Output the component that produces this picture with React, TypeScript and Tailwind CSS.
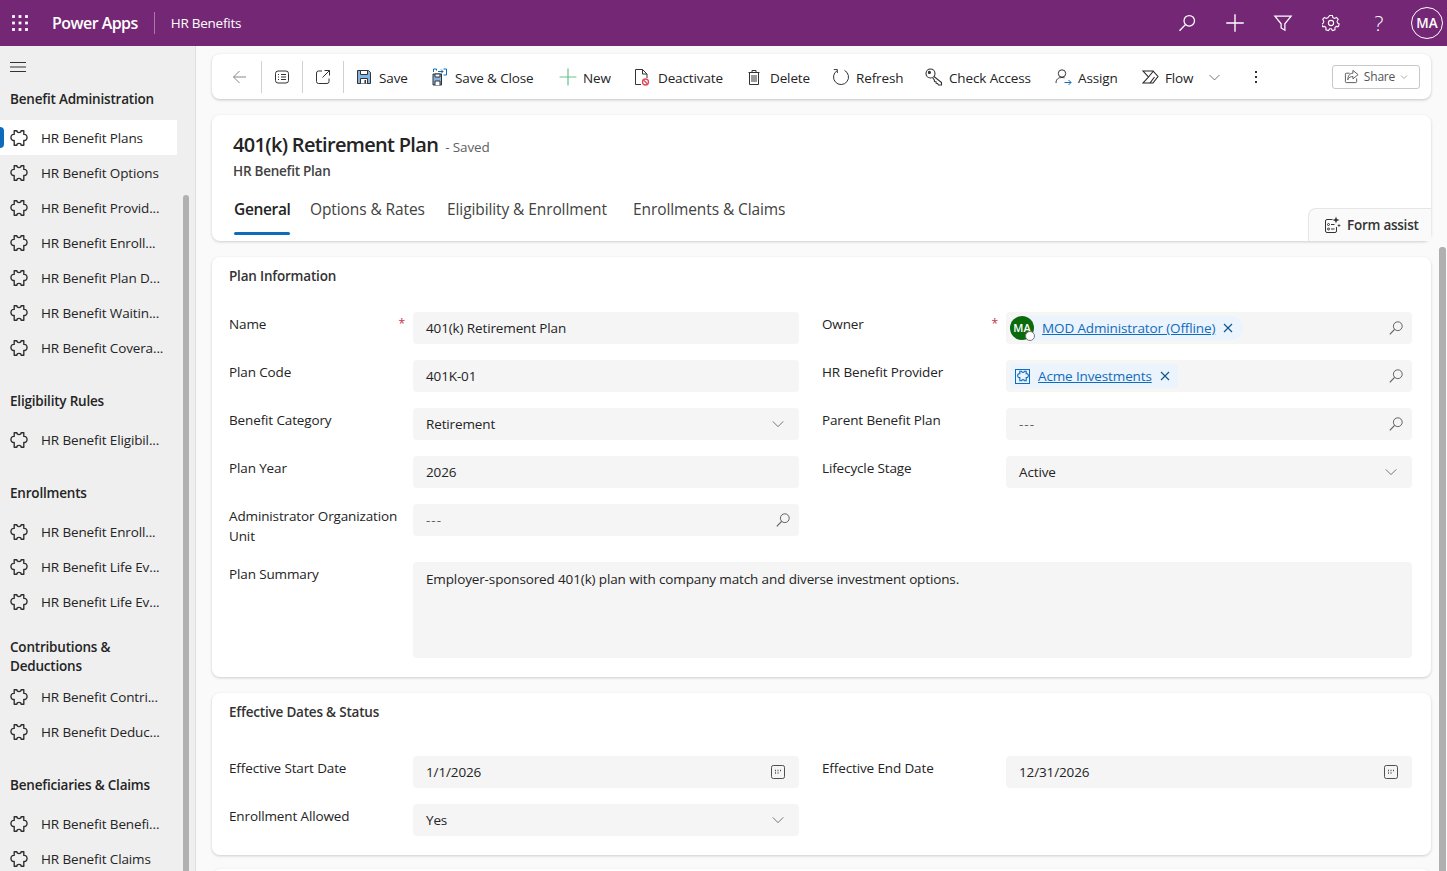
import type { ReactNode } from "react";

const font = "font-['Open_Sans','Liberation_Sans',sans-serif]";

const puzzlePath =
  "M5 3 H7.2 C7.2 5 10.8 5 10.8 3 H13 V6 C16.6 5.4 16.6 11.6 13 11 V15 H10.8 C10.8 13 7.2 13 7.2 15 H5 V11 C1.4 11.6 1.4 5.4 5 6 Z";

function Svg({ size = 16, className = "", children }: { size?: number; className?: string; children: ReactNode }) {
  return (
    <svg width={size} height={size} viewBox="0 0 16 16" fill="none" stroke="currentColor" strokeWidth="1" className={className}>
      {children}
    </svg>
  );
}

function PuzzleIcon() {
  return (
    <svg width="18" height="18" viewBox="1.5 1.5 15 15" fill="none" stroke="#2f2f2f" strokeWidth="1.15" strokeLinejoin="round" className="shrink-0">
      <path d={puzzlePath} />
    </svg>
  );
}

function SearchIcon({ className = "text-[#616161]" }: { className?: string }) {
  return (
    <Svg className={className}>
      <circle cx="9.8" cy="6.2" r="4.4" />
      <path d="M6.6 9.4 L1.8 14.4" strokeWidth="1.2" />
    </Svg>
  );
}

function ChevronIcon({ className = "text-[#616161]", size = 14 }: { className?: string; size?: number }) {
  return (
    <Svg size={size} className={className}>
      <path d="M2 5 L8 11 L14 5" />
    </Svg>
  );
}

function FieldChevron() {
  return (
    <span className="mr-[6px] flex">
      <ChevronIcon />
    </span>
  );
}

function CalendarIcon() {
  return (
    <span className="mr-[5px] flex">
      <Svg className="text-[#505050]">
        <rect x="1.5" y="1.5" width="13" height="13" rx="1.8" />
        <path d="M5 6.5h1M7.5 6.5h1M10 6.5h1M5 9h1M7.5 9h1" strokeWidth="1.3" />
      </Svg>
    </span>
  );
}

function Waffle() {
  return (
    <svg width="16" height="16" viewBox="0 0 16 16" fill="white">
      {[1.5, 8, 14.5].map((y) =>
        [1.5, 8, 14.5].map((x) => <rect key={`${x}-${y}`} x={x - 1.4} y={y - 1.4} width="2.8" height="2.8" />),
      )}
    </svg>
  );
}

const navSections = [
  {
    title: "Benefit Administration",
    head: "h-[30px] pl-[10px] pt-0",
    items: ["HR Benefit Plans", "HR Benefit Options", "HR Benefit Provid...", "HR Benefit Enroll...", "HR Benefit Plan D...", "HR Benefit Waitin...", "HR Benefit Covera..."],
  },
  { title: "Eligibility Rules", head: "h-[57px] pl-[10px] pt-[27px]", items: ["HR Benefit Eligibil..."] },
  { title: "Enrollments", head: "h-[57px] pl-[10px] pt-[27px]", items: ["HR Benefit Enroll...", "HR Benefit Life Ev...", "HR Benefit Life Ev..."] },
  { title: "Contributions & Deductions", head: "h-[60px] pl-[10px] pt-[19px]", items: ["HR Benefit Contri...", "HR Benefit Deduc..."] },
  { title: "Beneficiaries & Claims", head: "h-[57px] pl-[10px] pt-[27px]", items: ["HR Benefit Benefi...", "HR Benefit Claims"] },
];

function Sidebar() {
  return (
    <aside className="relative h-full w-[196px] shrink-0 overflow-hidden border-r border-[#e0e0e0] bg-[#efefef]">
      <div className="flex h-[44px] items-start pt-[13px] pl-[10px]">
        <svg width="16" height="16" viewBox="0 0 16 16" stroke="#333" strokeWidth="1">
          <path d="M0 3.5h16M0 8h16M0 12.5h16" />
        </svg>
      </div>
      {navSections.map((section, s) => (
        <div key={section.title}>
          <div className={`${section.head} w-[170px] text-[13.5px] leading-[19px] font-semibold tracking-[-0.2px] text-[#242424]`}>
            {section.title}
          </div>
          {section.items.map((item, i) => {
            const active = s === 0 && i === 0;
            return (
              <div key={`${item}-${i}`} className={`relative flex h-[35px] w-[177px] items-center gap-[13px] pl-[10px] ${active ? "bg-white" : ""}`}>
                {active && <span className="absolute top-[7px] left-0 h-[21px] w-[4px] rounded-r-sm bg-[#0f6cbd]" />}
                <PuzzleIcon />
                <span className="pt-[1px] text-[13.5px] tracking-[-0.13px] whitespace-nowrap text-[#242424]">{item}</span>
              </div>
            );
          })}
        </div>
      ))}
      <div className="absolute top-[149px] bottom-0 left-[183px] w-[6px] rounded-t-[3px] bg-[#b0b0b0]" />
    </aside>
  );
}

function TopBar() {
  return (
    <header className="flex h-[46px] shrink-0 items-center bg-[#742774] text-white">
      <div className="flex w-[52px] shrink-0 pl-[12px]">
        <Waffle />
      </div>
      <span className="text-[16px] font-semibold tracking-[-0.55px]">Power Apps</span>
      <span className="mx-[16px] h-[22px] w-px bg-[#a878a8]" />
      <span className="text-[13.5px] tracking-[-0.25px]">HR Benefits</span>
      <div className="ml-auto flex items-center">
        <HeadBtn>
          <Svg size={20}>
            <circle cx="9.8" cy="6.2" r="4.2" />
            <path d="M6.7 9.3 L2 14.2" strokeWidth="1.1" />
          </Svg>
        </HeadBtn>
        <HeadBtn>
          <Svg size={20}>
            <path d="M8 1v14M1 8h14" strokeWidth="1.1" />
          </Svg>
        </HeadBtn>
        <HeadBtn>
          <Svg size={20}>
            <path d="M1.5 2.5h13L9.5 8.6V13.8L6.5 12V8.6Z" />
          </Svg>
        </HeadBtn>
        <HeadBtn>
          <svg width="18" height="18" viewBox="0 0 18 18" fill="none" stroke="currentColor" strokeWidth="1.1">
            <circle cx="9" cy="9" r="2.6" />
            <path d="M7.6 1.5h2.8l.5 2.1 1.7.8 1.9-1 1.7 2-1.1 1.9.4 1.7 1.7 1-.9 2.6-2.1-.2-1.3 1.3.1 2.1-2.6.7-1.1-1.8h-1.7l-1.1 1.8-2.6-.7.1-2.1-1.3-1.3-2.1.2-.9-2.6 1.7-1 .4-1.7-1.1-1.9 1.7-2 1.9 1 1.7-.8Z" />
          </svg>
        </HeadBtn>
        <HeadBtn>
          <span className="text-[21px] leading-none font-light">?</span>
        </HeadBtn>
        <div className="mr-[4px] ml-[8px] flex h-[32px] w-[32px] items-center justify-center rounded-full border border-white text-[13.5px] font-semibold">
          MA
        </div>
      </div>
    </header>
  );
}

function HeadBtn({ children }: { children: ReactNode }) {
  return <div className="flex h-[46px] w-[48px] items-center justify-center">{children}</div>;
}

function Cmd({ icon, label, width, gap = "gap-[6px]" }: { icon: ReactNode; label: string; width: string; gap?: string }) {
  return (
    <div className={`flex h-[44px] shrink-0 items-center ${gap} ${width}`}>
      <span className="flex w-[18px] shrink-0 justify-center pt-[1px]">{icon}</span>
      <span className="pt-[3px] text-[13.5px] tracking-[-0.13px] whitespace-nowrap text-[#242424]">{label}</span>
    </div>
  );
}

function CommandBar() {
  return (
    <div className="flex h-[45px] items-center rounded-lg bg-white pl-[19px] shadow-[0_1px_3px_rgba(0,0,0,0.22)]">
      <span className="flex w-[18px] justify-center pt-[1px] text-[#888]">
        <Svg>
          <path d="M14 8H1.5M7.5 2 1.5 8l6 6" />
        </Svg>
      </span>
      <span className="ml-[12px] h-[32px] w-px bg-[#d1d1d1]" />
      <span className="ml-[11px] flex w-[17px] justify-center pt-[1px] text-[#333]">
        <Svg>
          <rect x="1.5" y="2" width="13" height="12" rx="2.5" />
          <path d="M4 5.5h1M7 5.5h5M4 8h1M7 8h5M4 10.5h1M7 10.5h5" />
        </Svg>
      </span>
      <span className="ml-[12px] h-[32px] w-px bg-[#d1d1d1]" />
      <span className="ml-[11px] flex w-[18px] justify-center pt-[1px] text-[#333]">
        <Svg>
          <path d="M7 2H3.5A2 2 0 0 0 1.5 4v8.5a2 2 0 0 0 2 2H12a2 2 0 0 0 2-2V9.5M9.5 1.5h5v5M14.5 1.5 7.5 8.5" />
        </Svg>
      </span>
      <span className="ml-[11px] h-[32px] w-px bg-[#d1d1d1]" />
      <div className="ml-[11px] flex items-center">
        <Cmd
          width="w-[76px]"
          icon={
            <svg width="16" height="16" viewBox="0 0 16 16">
              <path d="M1.5 1.5h11l2 2v11h-13Z" fill="#83b4e3" stroke="#333" />
              <path d="M4.5 1.5h7v4h-7Z" fill="#fff" stroke="#333" />
              <path d="M4.5 14.5v-5h7v5" fill="#fff" stroke="#333" />
              <path d="M8.5 11h1.5v3.5h-1.5Z" fill="#333" />
            </svg>
          }
          label="Save"
        />
        <Cmd
          width="w-[128px]"
          icon={
            <svg width="16" height="18" viewBox="0 0 16 18" fill="none">
              <path d="M1 6h8.5v11H1Z" fill="#83b4e3" stroke="#333" />
              <path d="M3 6h5v3H3ZM3 17v-4h5v4" fill="#fff" stroke="#333" />
              <path d="M4.5 2.5V1H1.5V4M11.5 1h3v6h-3M6 3.5h5M9 1.5l2 2-2 2" stroke="#0f6cbd" />
            </svg>
          }
          label="Save & Close"
        />
        <Cmd
          width="w-[74px]"
          icon={
            <Svg size={18} className="text-[#6cc28f]">
              <path d="M8 .5v15M.5 8h15" strokeWidth="1.1" />
            </Svg>
          }
          label="New"
        />
        <Cmd
          width="w-[112px]"
          gap="gap-[7px]"
          icon={
            <svg width="16" height="18" viewBox="0 0 16 18" fill="none">
              <path d="M7 16.5H1.5v-15h7l4.5 4.5v4M8.5 1.5v4.5H13" stroke="#333" />
              <circle cx="11.5" cy="14" r="3" stroke="#e0495b" strokeWidth="1.3" />
              <path d="M9.5 12 13.5 16" stroke="#e0495b" strokeWidth="1.3" />
            </svg>
          }
          label="Deactivate"
        />
        <Cmd
          width="w-[87px]"
          gap="gap-[7px]"
          icon={
            <svg width="12" height="17" viewBox="0 0 12 17" fill="none" stroke="#333">
              <path d="M1.5 3.5h9v12h-9ZM.5 3.5h11M4 3.5V1.5h4v2M4 6v7M6 6v7M8 6v7" />
            </svg>
          }
          label="Delete"
        />
        <Cmd
          width="w-[93px]"
          icon={
            <svg width="18" height="18" viewBox="0 0 18 18" fill="none" stroke="#333">
              <path d="M5.2 2.6A7.5 7.5 0 1 0 12.5 2.4" />
              <path d="M1.8 1.5h3.6v3.6" strokeWidth="0.9" />
            </svg>
          }
          label="Refresh"
        />
        <Cmd
          width="w-[129px]"
          icon={
            <svg width="18" height="18" viewBox="0 0 18 18" fill="none" stroke="#333" strokeWidth="1.1">
              <circle cx="5.5" cy="5.5" r="4.5" />
              <circle cx="4.4" cy="4.4" r="1" fill="#333" />
              <path d="M9 8.5 16.5 14.5v2.5h-3l-1-1.5-1.3-.2-.2-1.6-1.5-.2-.2-1.5L7.8 10" />
            </svg>
          }
          label="Check Access"
        />
        <Cmd
          width="w-[87px]"
          icon={
            <svg width="17" height="16" viewBox="0 0 17 16" fill="none" stroke="#333">
              <circle cx="7" cy="4.5" r="3.7" />
              <path d="M1 14c0-3.5 2-5.5 6-5.5 1 0 1.8.1 2.5.4" />
              <path d="M9.5 13.5h6.5M13.5 11l2.5 2.5-2.5 2.5" stroke="#0f6cbd" />
            </svg>
          }
          label="Assign"
        />
        <Cmd
          width="w-[67px]"
          icon={
            <svg width="17" height="14" viewBox="0 0 17 14" fill="none" stroke="#222" strokeWidth="1.1">
              <path d="M1 1h10l5 5.5-5 6.5H1l5.5-6Z" />
              <path d="M6.5 7 11.5 1M8 13l4.5-6" />
            </svg>
          }
          label="Flow"
        />
        <span className="pt-[1px]">
          <ChevronIcon size={13} className="text-[#555]" />
        </span>
        <span className="ml-[34px] flex flex-col gap-[3px] pt-[1px]">
          <span className="h-[2px] w-[2px] bg-[#333]" />
          <span className="h-[2px] w-[2px] bg-[#333]" />
          <span className="h-[2px] w-[2px] bg-[#333]" />
        </span>
      </div>
      <div className="mr-[11px] ml-auto flex h-[24px] w-[88px] items-center justify-center gap-[5px] rounded-[3px] border border-[#c8c8c8] text-[#555]">
        <Svg size={15}>
          <path d="M13.5 10v3.5a1 1 0 0 1-1 1h-10a1 1 0 0 1-1-1V5.5a1 1 0 0 1 1-1H6" />
          <path d="M9.5 1.5 15 6l-5.5 4.5V8C7 8 5 9 4 11.5 4 7.5 6 4.5 9.5 4.5Z" />
        </Svg>
        <span className="text-[12px] tracking-[-0.2px]">Share</span>
        <ChevronIcon size={8} />
      </div>
    </div>
  );
}

function RecordHeader() {
  return (
    <div className="relative mt-[16px] h-[126px] rounded-lg bg-white pt-[16px] pl-[21px] shadow-[0_1px_3px_rgba(0,0,0,0.18)]">
      <div className="flex items-baseline gap-[7px]">
        <span className="text-[20px] leading-[28px] font-semibold tracking-[-0.68px] text-[#242424]">401(k) Retirement Plan</span>
        <span className="text-[13.5px] tracking-[-0.13px] text-[#616161]">- Saved</span>
      </div>
      <div className="mt-[2px] text-[13.5px] leading-[20px] font-semibold tracking-[-0.25px] text-[#424242]">HR Benefit Plan</div>
      <div className="mt-[17px] flex text-[15.5px] leading-[22px] tracking-[-0.1px] text-[#424242]">
        <div className="ml-px w-[76px]">
          <span className="font-semibold tracking-[-0.35px] text-[#242424]">General</span>
          <div className="mt-[12px] h-[3px] w-[56px] rounded-sm bg-[#0f6cbd]" />
        </div>
        <span className="w-[137px] whitespace-nowrap">Options &amp; Rates</span>
        <span className="w-[186px] whitespace-nowrap">Eligibility &amp; Enrollment</span>
        <span className="whitespace-nowrap">Enrollments &amp; Claims</span>
      </div>
      <div className="absolute right-0 bottom-0 flex h-[33px] w-[123px] items-center gap-[6px] rounded-tl-lg border-t border-l border-[#e6e6e6] bg-[#fafafa] pl-[15px]">
        <svg width="17" height="18" viewBox="0 0 17 18" fill="none" stroke="#333">
          <path d="M8.5 3.5H3a1.5 1.5 0 0 0-1.5 1.5v10A1.5 1.5 0 0 0 3 16.5h8a1.5 1.5 0 0 0 1.5-1.5V11" />
          <circle cx="4.5" cy="8.5" r="1" />
          <circle cx="4.5" cy="13" r="1" />
          <path d="M7 8.5h3.5M7 13h3.5" />
          <path d="M12 .5l.9 2.6 2.6.9-2.6.9-.9 2.6-.9-2.6L8.5 4l2.6-.9ZM15 7.5l.5 1.5 1.5.5-1.5.5-.5 1.5-.5-1.5-1.5-.5 1.5-.5Z" fill="#333" stroke="none" />
        </svg>
        <span className="text-[13.5px] font-semibold tracking-[-0.25px] text-[#333]">Form assist</span>
      </div>
    </div>
  );
}

function Label({ children, required }: { children: ReactNode; required?: boolean }) {
  return (
    <div className="relative w-[184px] shrink-0 pt-[2px] pr-[10px] text-[13.5px] leading-[20px] tracking-[-0.13px] text-[#242424]">
      {children}
      {required && <span className="absolute top-[2px] right-[8px] text-[12px] leading-[20px] text-[#c4314b]">*</span>}
    </div>
  );
}

function Field({ value, right, muted }: { value: ReactNode; right?: ReactNode; muted?: boolean }) {
  return (
    <div className={`flex h-[32px] flex-1 items-center justify-between rounded bg-[#f5f5f5] pr-[8px] pl-[13px] text-[13.5px] ${muted ? "tracking-[1px] text-[#616161]" : "tracking-[-0.13px] text-[#242424]"}`}>
      <span>{value}</span>
      {right}
    </div>
  );
}

function Row({ label, required, children }: { label: ReactNode; required?: boolean; children: ReactNode }) {
  return (
    <div className="flex items-start">
      <Label required={required}>{label}</Label>
      {children}
    </div>
  );
}

function LookupField({ children }: { children: ReactNode }) {
  return (
    <div className="flex h-[32px] flex-1 items-center justify-between rounded bg-[#f5f5f5] pr-[8px] pl-[4px]">
      {children}
      <SearchIcon />
    </div>
  );
}

function RemoveX() {
  return (
    <svg width="10" height="10" viewBox="0 0 10 10" stroke="#0f548c" strokeWidth="1.1">
      <path d="M1 1l8 8M9 1l-8 8" />
    </svg>
  );
}

function PlanInformation() {
  return (
    <section className="mt-[16px] h-[420px] rounded-lg bg-white pt-[9px] pr-[19px] pl-[17px] shadow-[0_1px_3px_rgba(0,0,0,0.18)]">
      <h2 className="text-[13.5px] leading-[20px] font-semibold tracking-[-0.2px] text-[#333]">Plan Information</h2>
      <div className="mt-[26px] grid grid-cols-[570px_590px] gap-x-[23px] gap-y-[16px]">
        <Row label="Name" required>
          <Field value="401(k) Retirement Plan" />
        </Row>
        <Row label="Owner" required>
          <LookupField>
            <div className="flex h-[24px] items-center gap-[8px] rounded-full bg-[#ebf3fc] pr-[10px]">
              <span className="relative flex h-[24px] w-[24px] items-center justify-center rounded-full bg-[#0b6a0b] text-[11px] font-semibold text-white">
                MA
                <span className="absolute -right-px -bottom-px h-[10px] w-[10px] rounded-full border border-[#777] bg-white" />
              </span>
              <span className="text-[13.5px] tracking-[-0.13px] text-[#0f6cbd] underline">MOD Administrator (Offline)</span>
              <RemoveX />
            </div>
          </LookupField>
        </Row>
        <Row label="Plan Code">
          <Field value="401K-01" />
        </Row>
        <Row label="HR Benefit Provider">
          <LookupField>
            <div className="flex h-[24px] items-center gap-[8px] rounded bg-[#ebf3fc] pr-[8px] pl-[5px]">
              <span className="flex h-[15px] w-[15px] items-center justify-center border border-[#0f6cbd]">
                <svg width="12" height="12" viewBox="1.5 1.5 15 15" fill="none" stroke="#0f6cbd" strokeWidth="1.4">
                  <path d={puzzlePath} />
                </svg>
              </span>
              <span className="text-[13.5px] tracking-[-0.13px] text-[#0f6cbd] underline">Acme Investments</span>
              <RemoveX />
            </div>
          </LookupField>
        </Row>
        <Row label="Benefit Category">
          <Field value="Retirement" right={<FieldChevron />} />
        </Row>
        <Row label="Parent Benefit Plan">
          <Field value="---" muted right={<SearchIcon />} />
        </Row>
        <Row label="Plan Year">
          <Field value="2026" />
        </Row>
        <Row label="Lifecycle Stage">
          <Field value="Active" right={<FieldChevron />} />
        </Row>
        <Row label="Administrator Organization Unit">
          <Field value="---" muted right={<SearchIcon />} />
        </Row>
        <div />
        <div className="col-span-2 flex items-start">
          <Label>Plan Summary</Label>
          <div className="h-[96px] flex-1 rounded bg-[#f5f5f5] px-[13px] py-[7px] text-[13.5px] leading-[20px] tracking-[-0.13px] text-[#242424]">
            Employer-sponsored 401(k) plan with company match and diverse investment options.
          </div>
        </div>
      </div>
    </section>
  );
}

function EffectiveDates() {
  return (
    <section className="mt-[16px] h-[162px] rounded-lg bg-white pt-[9px] pr-[19px] pl-[17px] shadow-[0_1px_3px_rgba(0,0,0,0.18)]">
      <h2 className="text-[13.5px] leading-[20px] font-semibold tracking-[-0.2px] text-[#333]">Effective Dates &amp; Status</h2>
      <div className="mt-[34px] grid grid-cols-[570px_590px] gap-x-[23px] gap-y-[16px]">
        <Row label="Effective Start Date">
          <Field value="1/1/2026" right={<CalendarIcon />} />
        </Row>
        <Row label="Effective End Date">
          <Field value="12/31/2026" right={<CalendarIcon />} />
        </Row>
        <Row label="Enrollment Allowed">
          <Field value="Yes" right={<FieldChevron />} />
        </Row>
        <div />
      </div>
    </section>
  );
}

export default function App() {
  return (
    <div className={`${font} flex h-screen flex-col overflow-hidden bg-[#fafafa]`}>
      <TopBar />
      <div className="relative flex min-h-0 flex-1">
        <Sidebar />
        <main className="min-w-0 flex-1 overflow-hidden pt-[8px] pr-[16px] pl-[16px]">
          <CommandBar />
          <RecordHeader />
          <PlanInformation />
          <EffectiveDates />
          <div className="mt-[14px] h-[40px] rounded-lg bg-white shadow-[0_1px_3px_rgba(0,0,0,0.18)]" />
        </main>
        <div className="absolute top-[201px] right-[1px] bottom-0 w-[7px] rounded-t-[3px] bg-[#b0b0b0]" />
      </div>
    </div>
  );
}
